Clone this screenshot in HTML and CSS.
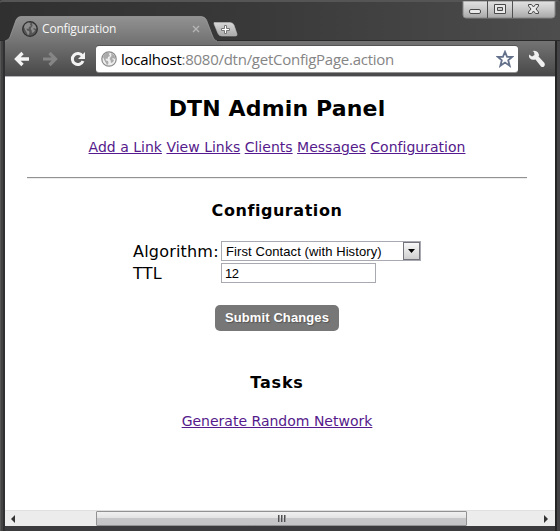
FILE: index.html
```html
<!DOCTYPE html>
<html lang="en">
<head>
<meta charset="utf-8">
<title>Configuration</title>
<link rel="stylesheet" href="styles.css">
</head>
<body>
<svg class="defs" width="0" height="0">
  <symbol id="globe-land" viewBox="0 0 16 16">
    <path d="M3 3.500 6 1.500 8.500 2 8 3.500 9 5 7 6 6.500 8 4.500 7.500 5 9.500 7 10 7.500 12 6 14.500 5 12 3.500 9.500 2 6zM10 2l3 2 1.500 3-1 1-1.500-1-1 1 2 1-1 2-2 1-.5-3-1-1 1-2 1-1z"/>
  </symbol>
</svg>
<div class="window">
  <header class="tabstrip">
    <div class="tab">
      <svg class="tab-shape" width="216" height="26" viewBox="0 0 216 26">
        <defs><linearGradient id="tabfill" x2="0" y2="1"><stop stop-color="#929292"/><stop offset="1" stop-color="#737373"/></linearGradient></defs>
        <path d="M0 26v-1q4-1 5-4L11 4q1.500-3.500 5-3.500H196q4 0 5.500 3.500l6 16q1.500 5 4.500 5H216V26z" fill="url(#tabfill)"/>
        <path d="M0 25q4-1 5-4L11 4q1.500-3.500 5-3.500H196q4 0 5.500 3.500l6 16q1.500 5 4.500 5" fill="none" stroke="#a2a2a2" stroke-width=".7"/>
      </svg>
      <svg class="favicon" width="16" height="16" viewBox="0 0 16 16"><circle cx="8" cy="8" r="7.300" fill="#555" stroke="#303030" stroke-width="1.300"/><use href="#globe-land" fill="#8c8c8c"/></svg>
      <span class="tab-title">Configuration</span>
      <svg class="tab-close" width="8" height="8" viewBox="0 0 8 8"><path d="M1 1l6 6M7 1L1 7" stroke="#b5b5b5" stroke-width="1.400"/></svg>
    </div>
    <svg class="newtab" width="25" height="15" viewBox="0 0 25 15">
      <defs><linearGradient id="newfill" x2="0" y2="1"><stop stop-color="#d8d8d8"/><stop offset="1" stop-color="#a9a9a9"/></linearGradient></defs>
      <path d="M1 .5H17q3 0 4 2.500l3 9q.5 2-1.500 2H9q-3 0-4-2.500L1 2z" fill="url(#newfill)" stroke="#bababa" stroke-width=".6"/>
      <path d="M11.500 3.500h2v3h3v2h-3v3h-2v-3h-3v-2h3z" fill="#fff" stroke="#777"/>
    </svg>
    <svg class="controls" width="94" height="18" viewBox="0 0 94 18">
      <defs><linearGradient id="ctl" x2="0" y2="1"><stop stop-color="#e2e2e2"/><stop offset=".45" stop-color="#cbcbcb"/><stop offset="1" stop-color="#a7a7a7"/></linearGradient></defs>
      <path d="M1 0H93V14q0 3-3 3H4q-3 0-3-3z" fill="url(#ctl)" stroke="#858585"/>
      <path d="M25.500 0v17M50.500 0v17" stroke="#505050"/>
      <g fill="#e9e9e9" stroke="#494949">
        <rect x="7.500" y="8.500" width="11" height="4" rx="1.500"/>
        <path d="M32.500 3.500h11v9h-11zM35.500 6.500v3h5v-3z" fill-rule="evenodd"/>
        <path d="M66.500 3.500h3l2 2.500 2-2.500h3v1.500L74 8l2.500 3v1.500h-3l-2-2.500-2 2.500h-3V11L69 8l-2.500-3z"/>
      </g>
    </svg>
  </header>
  <div class="toolbar">
    <svg width="16" height="16" viewBox="0 0 16 16"><path d="M8.500 2L2.500 8l6 6M3 8h12" fill="none" stroke="#f3f3f3" stroke-width="3.300"/></svg>
    <svg class="forward" width="16" height="16" viewBox="0 0 16 16"><path d="M7.500 2l6 6-6 6M13 8H1" fill="none" stroke="#858585" stroke-width="3.200"/></svg>
    <svg class="reload" width="16" height="16" viewBox="0 0 16 16"><path d="M12.500 5A5.500 5.500 0 1 0 13 10" fill="none" stroke="#f3f3f3" stroke-width="3"/><path d="M15 1v7H8z" fill="#f3f3f3"/></svg>
    <div class="omnibox">
      <svg width="16" height="16" viewBox="0 0 16 16"><circle cx="8" cy="8" r="7.200" fill="#ededed" stroke="#888" stroke-width="1.200"/><use href="#globe-land" fill="#aaa"/></svg>
      <span class="url"><b>localhost</b>:8080/dtn/getConfigPage.action</span>
      <svg class="star" width="18" height="18" viewBox="0 0 18 18"><path d="M9 1.800l2.100 5h5.200l-4.100 3.500 1.500 5.500L9 12.600l-4.700 3.200 1.500-5.500L1.700 6.800h5.200z" fill="#fff" stroke="#64718b" stroke-width="1.800"/></svg>
    </div>
    <svg class="wrench" width="18" height="18" viewBox="0 0 18 18"><path d="M1 4.500l3 2 2.500-1.500L6 2 4.500 1Q8 0 10 2.500q1.500 2 .5 4l6 6.500q1 2-.5 3.500-1.500 1-3 0L7.500 9.500Q4 10.500 2 8.500.5 7 1 4.500z" fill="#efefef"/></svg>
  </div>
  <main class="page">
    <div class="content">
      <h1><span>DTN Admin Panel</span></h1>
      <nav><a href="#">Add a Link</a> <a href="#">View Links</a> <a href="#">Clients</a> <a href="#">Messages</a> <a href="#">Configuration</a></nav>
      <hr>
      <h2 class="config-title">Configuration</h2>
      <form>
        <label for="algorithm">Algorithm:</label>
        <div class="select" id="algorithm"><span>First Contact (with History)</span><i class="drop"><svg width="7" height="4" viewBox="0 0 7 4"><path d="M0 0h7L3.500 4z"/></svg></i></div>
        <label for="ttl">TTL</label>
        <input id="ttl" type="text" value="12">
      </form>
      <button type="button">Submit Changes</button>
      <h2 class="tasks-title">Tasks</h2>
      <p><a class="generate" href="#">Generate Random Network</a></p>
    </div>
  </main>
  <div class="scrollbar">
    <svg width="4" height="8" viewBox="0 0 4 8"><path d="M4 0v8L0 4z" fill="#333"/></svg>
    <div class="thumb"><i></i><i></i><i></i></div>
    <svg width="4" height="8" viewBox="0 0 4 8"><path d="M0 0v8l4-4z" fill="#333"/></svg>
  </div>
</div>
</body>
</html>
```
FILE: styles.css
```css
* { box-sizing: border-box; }
body { margin: 0; background: #3b3b3d; overflow: hidden; }
svg { display: block; flex: none; }
.defs { position: absolute; }
.window {
  width: 560px; height: 531px;
  display: flex; flex-direction: column;
  padding: 0 5px 5px;
  background: linear-gradient(90deg, #565656 0 1px, #424243 1px 3px, #303032 3px 5px, #3b3b3d 5px 555px, #252526 555px 557px, #444446 557px);
  border-radius: 3px 3px 0 0;
}
.tabstrip {
  height: 41px; margin: 0 -5px; padding-left: 5px; flex: none;
  display: flex; align-items: flex-start;
  background: linear-gradient(90deg, #303030, #393939 45%, #4d4d4d);
  border-top: 2px solid #555; border-bottom: 1px solid #2a2a2a;
  border-radius: 3px 3px 0 0;
}
.tab {
  position: relative; width: 208px; height: 26px; margin-top: 14px;
  display: flex; align-items: center; padding: 0 0 0 17px; flex: none;
}
.tab-shape { position: absolute; left: 0; top: 0; }
.favicon, .tab-title, .tab-close { position: relative; }
.tab-title { margin-left: 4px; font: 12px/16px "Open Sans", sans-serif; color: #f7f7f7; letter-spacing: -.18px; white-space: nowrap; width: 76px; }
.tab-close { margin-left: 74px; }
.newtab { position: relative; margin-top: 20px; }
.controls { margin: -1px 4px 0 auto; }
.toolbar {
  height: 36px; flex: none; display: flex; align-items: center;
  padding: 0 9px 0 9px;
  background: linear-gradient(#747474, #484848);
  border-bottom: 1px solid #b5b5bb;
}
.forward { margin-left: 12px; }
.reload { margin-left: 12px; }
.omnibox {
  width: 424px; height: 26px; margin-left: 10px; padding: 0 4px 0 5px;
  display: flex; align-items: center;
  background: #fff; border-radius: 3px;
  box-shadow: 0 1px 0 #929292, 0 -1px 0 #555;
}
.url { margin-left: 4px; font: 15px/22px "Open Sans", sans-serif; color: #858585; letter-spacing: -.26px; white-space: nowrap; }
.url b { font-weight: 400; color: #000; }
.star { margin-left: auto; }
.wrench { margin-left: 10px; }
.page { height: 433px; flex: none; background: #fff; font-family: "DejaVu Sans", sans-serif; color: #000; }
.content { width: 500px; margin-left: 22px; display: flex; flex-direction: column; align-items: center; }
h1 { margin: 18px 0 0; font-size: 22px; line-height: 28px; letter-spacing: .15px; white-space: nowrap; }
nav { margin-top: 14px; font-size: 14px; line-height: 20px; letter-spacing: .015px; white-space: nowrap; }
a { color: #551a8b; text-decoration: underline; text-underline-offset: 1px; text-decoration-thickness: 1px; }
hr { width: 500px; height: 2px; margin: 20px 0 0; border: 0; border-top: 1px solid #929292; border-bottom: 1px solid #ededed; }
h2 { font-size: 16px; line-height: 20px; letter-spacing: .55px; }
.config-title { margin: 22px 0 0; }
form {
  width: 288px; margin: 20px 0 0;
  display: grid; grid-template-columns: 86px 200px; grid-template-rows: 20px 20px; gap: 2px;
}
label { font-size: 16px; line-height: 21px; letter-spacing: .2px; white-space: nowrap; }
.select, input { height: 20px; border: 1px solid #a9a9b1; background: #fff; color: #000; font: 13px/19px "Liberation Sans", sans-serif; border-radius: 0; }
.select { display: flex; justify-content: space-between; padding-left: 4px; letter-spacing: .09px; white-space: nowrap; }
.drop { width: 17px; height: 18px; border: 1px solid #73737b; background: linear-gradient(#f7f7f7, #cfcfcf); display: flex; align-items: center; justify-content: center; }
input { width: 155px; margin: 0; padding: 0 3px; outline: 0; letter-spacing: -.4px; }
button {
  width: 124px; height: 26px; margin: 22px 0 0; padding: 0;
  border: 0; border-radius: 5px; background: #777; color: #fff;
  font: bold 13px/26px "Liberation Sans", sans-serif; letter-spacing: .1px;
  text-shadow: 1px 1px 1px #555; white-space: nowrap;
}
.tasks-title { margin: 42px 0 0; letter-spacing: .8px; }
p { margin: 18px 0 0; font-size: 14px; line-height: 20px; white-space: nowrap; }
.scrollbar {
  height: 16px; flex: none; display: flex; align-items: center; justify-content: space-between;
  padding: 0 7px 0 6px; background: #ececec; border-top: 1px solid #e0e0e0;
}
.thumb {
  width: 371px; height: 15px; margin-right: -4px; display: flex; align-items: center; justify-content: center; gap: 1px;
  border: 1px solid #929292; border-radius: 1px;
  background: linear-gradient(#f1f1f1, #e2e2e2 48%, #c7c7c9 50%, #c4c4c7);
}
.thumb i { width: 2px; height: 7px; background: linear-gradient(90deg, #505050 50%, #999 50%); }
```
